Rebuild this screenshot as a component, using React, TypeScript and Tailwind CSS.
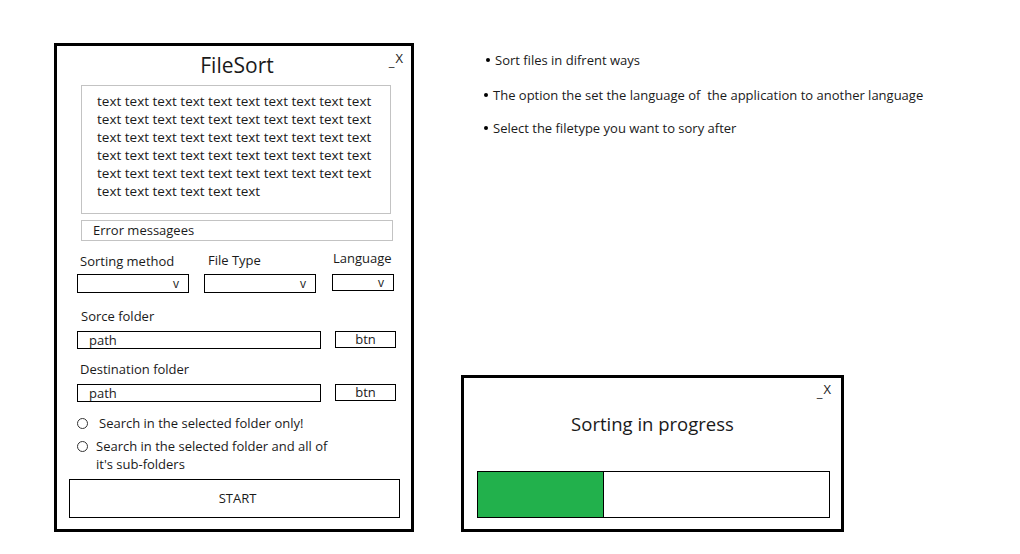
import React from 'react';

const font = { fontFamily: '"Open Sans", "Liberation Sans", sans-serif' };

function WinControls({ className }: { className: string }) {
  return (
    <div className={`flex items-start text-[13px] leading-none text-[#222] ${className}`}>
      <span className="mt-[3px]">_</span>
      <span className="ml-[1px]">X</span>
    </div>
  );
}

function Dropdown({ width, height }: { width: string; height: string }) {
  return (
    <div className={`flex items-center justify-end border border-black pr-[9px] text-[12px] leading-none ${width} ${height}`}>
      v
    </div>
  );
}

function PathRow() {
  return (
    <div className="ml-[20px] flex items-start">
      <div className="flex h-[18px] w-[244px] items-end border border-black pl-[11px] text-[13px] leading-[16px]">
        path
      </div>
      <div className="ml-[14px] flex h-[17px] w-[61px] items-center justify-center border border-black text-[13px] leading-none">
        btn
      </div>
    </div>
  );
}

function Radio({ children, textGap }: { children: React.ReactNode; textGap: string }) {
  return (
    <div className="ml-[20px] flex items-start text-[13px] leading-[18px]">
      <span className="mt-[4px] h-[11px] w-[11px] shrink-0 rounded-full border border-[#333]" />
      <span className={textGap}>{children}</span>
    </div>
  );
}

function Bullet({ children, className }: { children: React.ReactNode; className: string }) {
  return (
    <div className={`flex items-center whitespace-pre ${className}`}>
      <span className="mr-[5px] h-[4px] w-[4px] rounded-full bg-black" />
      {children}
    </div>
  );
}

export default function App() {
  const lines = [
    'text text text text text text text text text text',
    'text text text text text text text text text text',
    'text text text text text text text text text text',
    'text text text text text text text text text text',
    'text text text text text text text text text text',
    'text text text text text text',
  ];

  return (
    <div className="min-h-screen bg-white text-[#1a1a1a]" style={font}>
      <div className="flex items-stretch pl-[54px] pt-[43px]">
        {/* main window */}
        <div className="relative flex h-[489px] w-[360px] flex-col border-[3px] border-black">
          <WinControls className="absolute right-[8px] top-[6px]" />
          <div className="ml-[6px] mt-[5px] text-center text-[21px] leading-[28px]">FileSort</div>

          <div className="ml-[24px] mt-[6px] h-[129px] w-[310px] border border-[#c3c3c3] pl-[15px] pt-[6px] text-[13.5px] leading-[18px]">
            {lines.map((l, i) => (
              <div key={i} className="whitespace-nowrap">{l}</div>
            ))}
          </div>

          <div className="ml-[24px] mt-[6px] flex h-[21px] w-[312px] items-center border border-[#c3c3c3] pl-[11px] text-[13px] leading-none">
            Error messagees
          </div>

          {/* selects */}
          <div className="ml-[20px] mt-[11px] flex items-start text-[13px] leading-[18px]">
            <div className="flex flex-col">
              <span className="mb-[4px] ml-[3px]">Sorting method</span>
              <Dropdown width="w-[112px]" height="h-[19px]" />
            </div>
            <div className="ml-[15px] flex flex-col">
              <span className="-mt-[1px] mb-[5px] ml-[4px]">File Type</span>
              <Dropdown width="w-[112px]" height="h-[19px]" />
            </div>
            <div className="ml-[16px] flex flex-col">
              <span className="-mt-[3px] mb-[7px] ml-[1px]">Language</span>
              <Dropdown width="w-[62px]" height="h-[17px]" />
            </div>
          </div>

          <div className="ml-[24px] mt-[14px] text-[13px] leading-[18px]">Sorce folder</div>
          <div className="mt-[6px]">
            <PathRow />
          </div>

          <div className="ml-[23px] mt-[11px] text-[13px] leading-[18px]">Destination folder</div>
          <div className="mt-[6px]">
            <PathRow />
          </div>

          <div className="mt-[12px]">
            <Radio textGap="ml-[11px]">Search in the selected folder only!</Radio>
          </div>
          <div className="mt-[5px]">
            <Radio textGap="ml-[8px]">
              Search in the selected folder and all of
              <br />
              it's sub-folders
            </Radio>
          </div>

          <div className="ml-[12px] mt-[6px] flex h-[39px] w-[331px] items-center justify-center border border-black pl-[6px] text-[13px] leading-none">
            START
          </div>
        </div>

        {/* right side */}
        <div className="ml-[47px] flex flex-col justify-between">
          <div className="ml-[23px] mt-[8px] flex flex-col text-[13px] leading-[18px]">
            <Bullet className="ml-[2px]">Sort files in difrent ways</Bullet>
            <Bullet className="mt-[17px]">The option the set the language of  the application to another language</Bullet>
            <Bullet className="mt-[15px]">Select the filetype you want to sory after</Bullet>
          </div>

          <div className="relative flex h-[157px] w-[383px] flex-col border-[3px] border-black">
            <WinControls className="absolute right-[10px] top-[5px]" />
            <div className="mt-[33px] text-center text-[18.5px] leading-[26px]">Sorting in progress</div>
            <div className="ml-[13px] mt-[34px] flex h-[47px] w-[353px] border border-black">
              <div className="h-full w-[126px] border-r border-black bg-[#22b14c]" />
            </div>
          </div>
        </div>
      </div>
    </div>
  );
}
